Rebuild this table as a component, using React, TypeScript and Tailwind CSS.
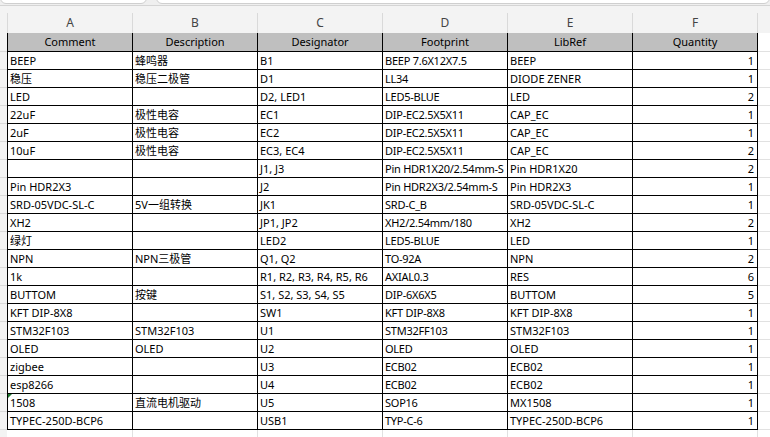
import React from "react";

const columns = ["A", "B", "C", "D", "E", "F"];
const headers = ["Comment", "Description", "Designator", "Footprint", "LibRef", "Quantity"];

const rows: string[][] = [
  ["BEEP", "蜂鸣器", "B1", "BEEP 7.6X12X7.5", "BEEP", "1"],
  ["稳压", "稳压二极管", "D1", "LL34", "DIODE ZENER", "1"],
  ["LED", "", "D2, LED1", "LED5-BLUE", "LED", "2"],
  ["22uF", "极性电容", "EC1", "DIP-EC2.5X5X11", "CAP_EC", "1"],
  ["2uF", "极性电容", "EC2", "DIP-EC2.5X5X11", "CAP_EC", "1"],
  ["10uF", "极性电容", "EC3, EC4", "DIP-EC2.5X5X11", "CAP_EC", "2"],
  ["", "", "J1, J3", "Pin HDR1X20/2.54mm-S", "Pin HDR1X20", "2"],
  ["Pin HDR2X3", "", "J2", "Pin HDR2X3/2.54mm-S", "Pin HDR2X3", "1"],
  ["SRD-05VDC-SL-C", "5V一组转换", "JK1", "SRD-C_B", "SRD-05VDC-SL-C", "1"],
  ["XH2", "", "JP1, JP2", "XH2/2.54mm/180", "XH2", "2"],
  ["绿灯", "", "LED2", "LED5-BLUE", "LED", "1"],
  ["NPN", "NPN三极管", "Q1, Q2", "TO-92A", "NPN", "2"],
  ["1k", "", "R1, R2, R3, R4, R5, R6", "AXIAL0.3", "RES", "6"],
  ["BUTTOM", "按键", "S1, S2, S3, S4, S5", "DIP-6X6X5", "BUTTOM", "5"],
  ["KFT DIP-8X8", "", "SW1", "KFT DIP-8X8", "KFT DIP-8X8", "1"],
  ["STM32F103", "STM32F103", "U1", "STM32FF103", "STM32F103", "1"],
  ["OLED", "OLED", "U2", "OLED", "OLED", "1"],
  ["zigbee", "", "U3", "ECB02", "ECB02", "1"],
  ["esp8266", "", "U4", "ECB02", "ECB02", "1"],
  ["1508", "直流电机驱动", "U5", "SOP16", "MX1508", "1"],
  ["TYPEC-250D-BCP6", "", "USB1", "TYP-C-6", "TYPEC-250D-BCP6", "1"],
];

// first column also carries the table's left border
const cellWidth = (i: number) => (i === 0 ? "w-[126px] border-l" : "w-[125px]");

const RowHead = () => (
  <div className="w-[7px] shrink-0 border-b border-[#d9d9d9] bg-[#f3f3f3]" />
);

export default function App() {
  return (
    <div className="h-[437px] w-[770px] overflow-hidden bg-white font-['Noto_Sans','Noto_Sans_CJK_SC',sans-serif] text-[11px] text-black">
      {/* bottom edge of the formula bar */}
      <div className="flex h-[6px] items-end gap-[9px] overflow-hidden border-b border-[#d4d4d4] bg-[#efefef]">
        <div className="mb-[1px] h-[20px] w-[147px] shrink-0 rounded-b-[6px] border border-[#cfcfcf] bg-white" />
        <div className="mb-[1px] h-[20px] flex-1 rounded-b-[6px] border border-[#cfcfcf] bg-white" />
      </div>

      {/* column letters */}
      <div className="flex h-[27px] bg-[#f3f3f3]">
        <div className="h-[20px] w-[7px] shrink-0 self-end" />
        {columns.map((c, i) => (
          <div
            key={c}
            className={`flex h-[20px] shrink-0 items-center justify-center self-end border-r border-[#d9d9d9] text-[12px] text-[#444] ${
              i === 0 ? "w-[126px] border-l" : "w-[125px]"
            }`}
          >
            {c}
          </div>
        ))}
        <div className="h-[20px] flex-1 self-end" />
      </div>

      {/* header row */}
      <div className="flex h-[19px]">
        <RowHead />
        {headers.map((h, i) => (
          <div
            key={h}
            className={`shrink-0 overflow-hidden whitespace-nowrap border-r border-b border-black bg-[#bfbfbf] text-center leading-[18px] ${cellWidth(i)}`}
          >
            {h}
          </div>
        ))}
        <div className="flex-1 border-b border-[#e1e1e1]" />
      </div>

      {rows.map((row, r) => (
        <div key={`row-${r}`} className="flex h-[18px]">
          <RowHead />
          {row.map((v, i) => (
            <div
              key={`cell-${r}-${i}`}
              className={`relative shrink-0 overflow-hidden whitespace-nowrap border-r border-b border-black pt-[1px] leading-[16px] ${cellWidth(i)} ${
                i === 5 ? "pr-[3px] text-right" : "pl-[2px]"
              } ${i === 3 ? "tracking-[-0.25px]" : ""}`}
            >
              {r === 19 && i === 0 && (
                <svg className="absolute left-0 top-0" width="4" height="4" viewBox="0 0 4 4">
                  <polygon points="0,0 4,0 0,4" fill="#1f7a2f" />
                </svg>
              )}
              {v}
            </div>
          ))}
          <div className="flex-1 border-b border-[#e1e1e1]" />
        </div>
      ))}

      {/* empty row below the table */}
      <div className="flex h-[10px]">
        <div className="w-[7px] shrink-0 bg-[#f3f3f3]" />
        {columns.map((c, i) => (
          <div key={`blank-${c}`} className={`shrink-0 border-r border-[#e1e1e1] ${i === 0 ? "w-[126px]" : "w-[125px]"}`} />
        ))}
      </div>
    </div>
  );
}
